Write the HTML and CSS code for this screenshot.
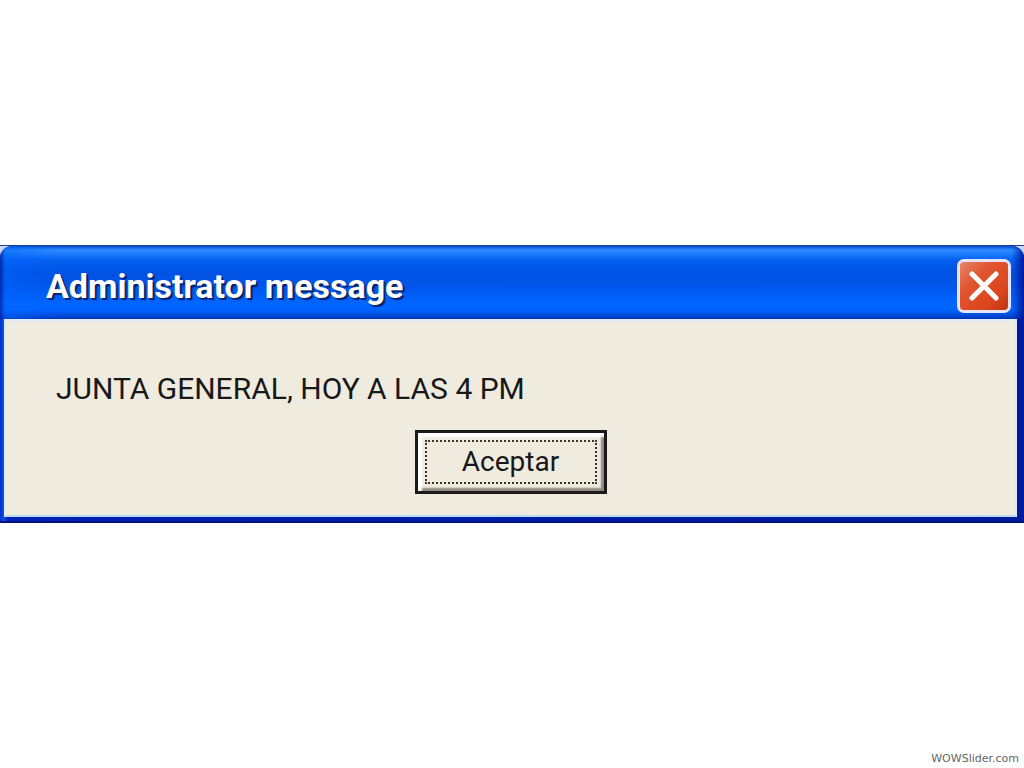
FILE: index.html
```
<!DOCTYPE html>
<html lang="es">

<head>
    <meta charset="utf-8">
    <title>Administrator message</title>
    <link rel="stylesheet" href="styles.css">
</head>

<body class="page">

    <div class="dialog-frame">
        <div class="dialog" role="dialog" aria-labelledby="dialog-title">

            <!-- title bar -->
            <div class="titlebar">
                <h1 class="title" id="dialog-title">Administrator message</h1>
                <button class="close" type="button" aria-label="Cerrar">
                    <svg viewBox="0 0 30 30" width="30" height="30" aria-hidden="true">
                        <path d="M3 3 L27 27 M27 3 L3 27" />
                    </svg>
                </button>
            </div>

            <!-- content -->
            <div class="content">
                <p class="message">JUNTA GENERAL, HOY A LAS 4 PM</p>
                <button class="accept" type="button"><span class="accept-label">Aceptar</span></button>
            </div>

        </div>
    </div>

    <footer class="credit"><a href="#">WOWSlider.com</a></footer>

</body>

</html>
```
FILE: styles.css
```
* {
    box-sizing: border-box;
}

.page {
    --face: #efebdf;
    --ink: #181818;
    margin: 0;
    min-height: 100vh;
    display: grid;
    grid-template-rows: 1fr auto 1fr;
    background-color: white;
    font-family: Roboto, "Liberation Sans", Arial, sans-serif;
}

/* the square behind the rounded corners */
.dialog-frame {
    grid-row: 2;
    background-color: #c9d6ee;
    border-top: 1px solid #14409c;
}

.dialog {
    border-radius: 12px 12px 0 0;
    background: linear-gradient(to right, #0030c4 0, #0058ee 4px, #001fb4 8px, #001a9c 100%);
    border-bottom: 2px solid #00107c;
    padding-bottom: 4px;
}

/* title bar */
.titlebar {
    display: flex;
    align-items: center;
    justify-content: space-between;
    height: 73px;
    padding: 6px 13px 0 46px;
    border-radius: 12px 12px 0 0;
    background:
        linear-gradient(to right, rgb(0 30 160 / 80%) 0, rgb(0 100 255 / 50%) 5px, transparent 60px, transparent calc(100% - 12px), rgb(0 20 150 / 90%) 100%),
        linear-gradient(#0648c4 0, #2c8cff 4px, #2080fc 7px, #0260f0 14px, #0052e2 26px, #0056ea 40px, #0064ff 56px, #0064ff 64px, #0048d4 70px, #0034b4 73px);
}

.title {
    margin: 0;
    font-size: 34px;
    line-height: 40px;
    font-weight: bold;
    color: white;
    text-shadow: 2px 2px 1px #0a2068;
}

.close {
    display: grid;
    place-items: center;
    width: 54px;
    height: 54px;
    padding: 0;
    border: 3px solid #e8e4f8;
    border-radius: 7px;
    background: linear-gradient(135deg, #e88468 0, #e05430 35%, #dc441c 75%, #b83414 100%);
    cursor: pointer;
}

.close svg {
    fill: none;
    stroke: white;
    stroke-width: 5;
    stroke-linecap: round;
}

/* content */
.content {
    display: flex;
    flex-direction: column;
    align-items: center;
    gap: 21px;
    margin: 0 7px 0 4px;
    padding: 48px 50px 21px;
    border: 2px solid #dcecff;
    border-bottom-color: #b8dcff;
    background-color: var(--face);
}

.message {
    align-self: stretch;
    margin: 0;
    font-size: 30px;
    line-height: 40px;
    color: var(--ink);
}

.accept {
    width: 192px;
    height: 64px;
    padding: 7px;
    border: 3px solid #1c1a18;
    background-color: var(--face);
    box-shadow: inset 4px 4px 2px white, inset -3px -3px 2px #8c887c;
    cursor: pointer;
}

.accept-label {
    display: grid;
    place-items: center;
    height: 100%;
    border: 2px dotted #38342c;
    font-family: Roboto, "Liberation Sans", sans-serif;
    font-size: 28px;
    line-height: 36px;
    color: var(--ink);
}

.credit {
    grid-row: 3;
    align-self: end;
    padding: 0 5px 1px;
    text-align: right;
    font-family: "DejaVu Sans", Verdana, sans-serif;
    font-size: 11px;
    line-height: 16px;
}

.credit a {
    color: #666;
    text-decoration: none;
}
```
